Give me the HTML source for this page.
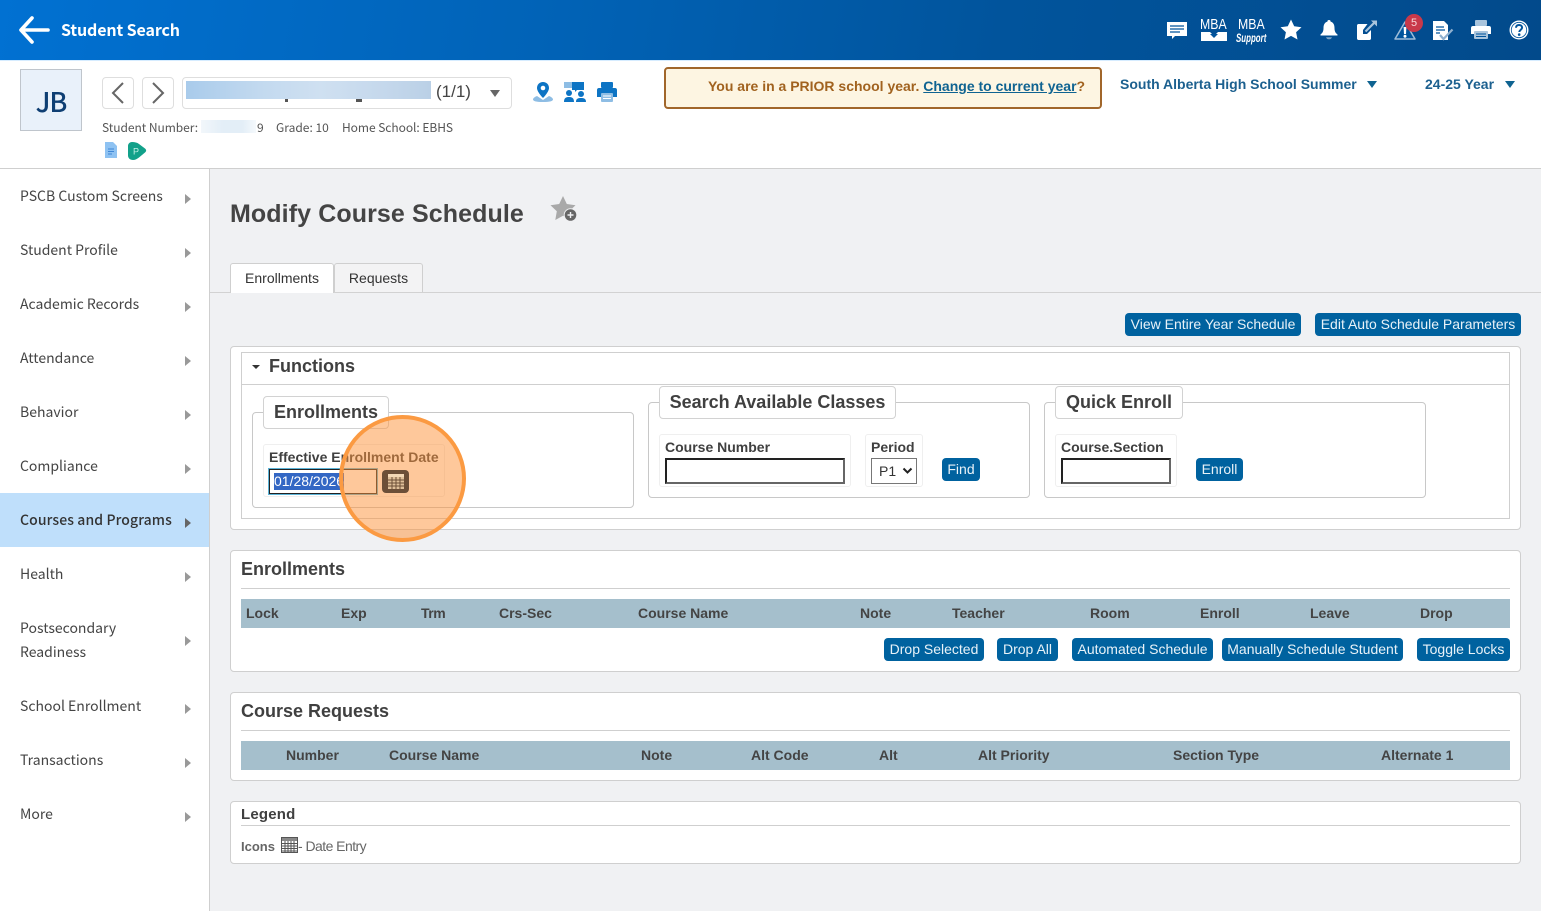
<!DOCTYPE html>
<html><head><meta charset="utf-8"><title>Modify Course Schedule</title>
<style>
*{box-sizing:border-box}
html,body{margin:0;padding:0}
body{width:1541px;height:911px;position:relative;overflow:hidden;background:#f0f1f3;font-family:"Liberation Sans",sans-serif;color:#444}
.a,.t,.b,.box{position:absolute}
.t{white-space:nowrap;line-height:16px}
.b{background:#00629f;color:#e8f2f8;border-radius:4px;font-size:14px;letter-spacing:0;text-align:center;line-height:23px;height:23px;white-space:nowrap}
.box{background:#fff;border:1px solid #cfcfcf;border-radius:4px}
.fs{background:#fff;border:1px solid #c8c8c8;border-radius:4px}
.lg{background:#fff;border:1px solid #d2d2d2;border-radius:4px;font-weight:bold;font-size:18px;color:#404040;line-height:31px;text-align:center;height:33px}
.fld{background:#fff;border:1px solid #efefef;border-radius:3px}
.lb{font-weight:bold;font-size:14px;color:#404040}
.inp{background:#fff;border:2px solid;border-color:#222 #666 #666 #222;height:26px}
.nav{font-family:"Noto Sans CJK SC","Noto Sans CJK JP",sans-serif;font-size:14px;color:#444;left:20px;letter-spacing:0}
.ar{position:absolute;left:185px;width:0;height:0;border-left:6px solid #999;border-top:5px solid transparent;border-bottom:5px solid transparent}
.th{font-weight:bold;font-size:14px;color:#444;top:605px}
.th2{font-weight:bold;font-size:14px;color:#444;top:747px}
.h{font-weight:bold;font-size:18px;color:#404040}
.side{font-family:"Noto Sans CJK SC","Noto Sans CJK JP",sans-serif}
</style></head><body>

<!-- top bar -->
<div class="a" style="left:0;top:0;width:1541px;height:60px;background:linear-gradient(100deg,#0171d2 0%,#0163b7 35%,#01549c 65%,#024a8b 100%)"></div>
<svg class="a" style="left:18px;top:15px" width="34" height="30" viewBox="0 0 34 30"><path d="M14 3 L3 15 L14 27 M3 15 H30" fill="none" stroke="#fff" stroke-width="3.6" stroke-linecap="round" stroke-linejoin="round"/></svg>
<div class="t side" style="left:61px;top:19px;color:#fff;font-weight:bold;font-size:16px;line-height:20px;letter-spacing:-.12px">Student Search</div>

<!-- top icons -->
<svg class="a" style="left:1166px;top:21px" width="22" height="20" viewBox="0 0 22 20"><path d="M1 1H21V15H9L6 18V15H1Z" fill="#fff"/><path d="M4 5H18M4 8H18M4 11H14" stroke="#01549c" stroke-width="1.3"/></svg>
<div class="t" style="left:1200px;top:17px;color:#fff;font-size:15px;transform:scaleX(.82);transform-origin:0 0">MBA</div>
<svg class="a" style="left:1201px;top:32px" width="26" height="10" viewBox="0 0 26 10"><path d="M0 0H9L13 4L17 0H26V9H0Z" fill="#fff"/><path d="M9 2H17L13 6Z" fill="#01549c"/></svg>
<div class="t" style="left:1238px;top:17px;color:#fff;font-size:15px;transform:scaleX(.82);transform-origin:0 0">MBA</div>
<div class="t" style="left:1236px;top:30px;color:#fff;font-size:12px;font-weight:bold;font-style:italic;transform:scaleX(.66);transform-origin:0 0">Support</div>
<svg class="a" style="left:1280px;top:19px" width="22" height="22" viewBox="0 0 22 22"><path d="M11 0.5L14.2 7.3 21.5 8.2 16.1 13.2 17.5 20.5 11 16.9 4.5 20.5 5.9 13.2 0.5 8.2 7.8 7.3Z" fill="#fff"/></svg>
<svg class="a" style="left:1319px;top:19px" width="20" height="22" viewBox="0 0 20 22"><path d="M10 1C11 1 11.6 1.6 11.6 2.6C14.5 3.4 15.5 6 15.5 9C15.5 12 16.4 14 18.5 15.5V16.5H1.5V15.5C3.6 14 4.5 12 4.5 9C4.5 6 5.5 3.4 8.4 2.6C8.4 1.6 9 1 10 1Z" fill="#fff"/><path d="M7 18.2H13C12.5 19.6 11.4 20.3 10 20.3S7.5 19.6 7 18.2Z" fill="#7fa5c8"/></svg>
<svg class="a" style="left:1356px;top:19px" width="22" height="22" viewBox="0 0 22 22"><path d="M2.500 5H11.500L7 11V15H11L15 11V19.500C15 20.300 14.300 21 13.500 21H2.500C1.700 21 1 20.300 1 19.500V6.500C1 5.700 1.700 5 2.500 5Z" fill="#fff"/><path d="M9.500 12.500L19 3" fill="none" stroke="#a9c4dc" stroke-width="2.200"/><path d="M15 1.500H21V7.500Z" fill="#a9c4dc"/></svg>
<svg class="a" style="left:1394px;top:19px" width="24" height="22" viewBox="0 0 24 22"><path d="M11 3L21 20H1Z" fill="#01549c" stroke="#9fbcd8" stroke-width="1.500" stroke-linejoin="round"/><path d="M9.600 8H12.400L12 15H10Z" fill="#fff"/><circle cx="11" cy="17.300" r="1.500" fill="#fff"/></svg>
<div class="a" style="left:1405px;top:14px;width:18px;height:18px;border-radius:50%;background:#c9394a;color:#f6d8da;font-size:11px;line-height:18px;text-align:center">5</div>
<svg class="a" style="left:1432px;top:20px" width="22" height="22" viewBox="0 0 22 22"><path d="M1 1H12L16 5V20H1Z" fill="#fff"/><path d="M4 7H12M4 10H13M4 13H8" stroke="#01549c" stroke-width="1.300"/><path d="M8 15L11.500 19L20.500 9.500" fill="none" stroke="#8fb0cf" stroke-width="2.200"/></svg>
<svg class="a" style="left:1470px;top:19px" width="22" height="22" viewBox="0 0 22 22"><rect x="5" y="1" width="12" height="6" rx="1" fill="#a9c4dc"/><path d="M3 7H19C20.200 7 21 7.800 21 9V15H1V9C1 7.800 1.800 7 3 7Z" fill="#fff"/><rect x="4" y="12" width="14" height="8" rx="1" fill="#a9c4dc"/><path d="M6 15H16M6 17.500H16" stroke="#01549c" stroke-width="1"/></svg>
<svg class="a" style="left:1509px;top:20px" width="20" height="20" viewBox="0 0 20 20"><circle cx="10" cy="10" r="9.500" fill="#fff"/><circle cx="10" cy="10" r="7.700" fill="none" stroke="#01549c" stroke-width=".8"/><path d="M7 7.800C7 5.900 8.300 5 10 5C11.800 5 13.100 6 13.100 7.600C13.100 9.800 10.300 9.900 10.300 12" fill="none" stroke="#01549c" stroke-width="2"/><circle cx="10.200" cy="14.600" r="1.300" fill="#01549c"/></svg>

<!-- student header -->
<div class="a" style="left:0;top:60px;width:1541px;height:109px;background:#fff;border-top:1px solid #d6ecff;border-bottom:1px solid #cfcfcf"></div>
<div class="a side" style="left:20px;top:69px;width:62px;height:62px;background:#e9f1fa;border:1px solid #bfc5cc;color:#0f3f73;font-size:27px;line-height:62px;text-align:center;letter-spacing:-1px;font-weight:500">JB</div>
<div class="a" style="left:102px;top:77px;width:32px;height:32px;border:1px solid #dedede;border-radius:4px;background:#fff"></div>
<svg class="a" style="left:110px;top:81px" width="16" height="24" viewBox="0 0 16 24"><path d="M13 2L3 12L13 22" fill="none" stroke="#666" stroke-width="2"/></svg>
<div class="a" style="left:142px;top:77px;width:32px;height:32px;border:1px solid #dedede;border-radius:4px;background:#fff"></div>
<svg class="a" style="left:150px;top:81px" width="16" height="24" viewBox="0 0 16 24"><path d="M3 2L13 12L3 22" fill="none" stroke="#666" stroke-width="2"/></svg>
<div class="a" style="left:182px;top:77px;width:330px;height:32px;border:1px solid #dedede;border-radius:4px;background:#fff"></div>
<div class="a" style="left:186px;top:81px;width:245px;height:18px;background:linear-gradient(90deg,#a9cbeb 0%,#c2d9ef 30%,#cfe0f1 55%,#c5d8ec 80%,#bad0e6 100%)"></div>
<div class="a" style="left:285px;top:99px;width:3px;height:3px;background:#555"></div>
<div class="a" style="left:356px;top:99px;width:6px;height:3px;background:#555"></div>
<div class="t" style="left:436px;top:84px;font-size:17px;color:#444">(1/1)</div>
<div class="a" style="left:490px;top:90px;width:0;height:0;border-top:7px solid #666;border-left:5.500px solid transparent;border-right:5.500px solid transparent"></div>
<div class="t side" style="left:102px;top:120px;font-size:12px;color:#555;letter-spacing:-.05px">Student Number:</div>
<div class="a" style="left:201px;top:120px;width:55px;height:13px;background:linear-gradient(90deg,#f2f7fb,#e3eef7 40%,#e3eef7 75%,#f5f9fc)"></div>
<div class="t side" style="left:257px;top:120px;font-size:12px;color:#555">9</div>
<div class="t side" style="left:276px;top:120px;font-size:12px;color:#555">Grade: 10</div>
<div class="t side" style="left:342px;top:120px;font-size:12px;color:#555;letter-spacing:-.05px">Home School: EBHS</div>
<svg class="a" style="left:104px;top:142px" width="14" height="17" viewBox="0 0 14 17"><path d="M1 0H9L13 4V16H1Z" fill="#8ec2f2"/><path d="M4 7H10M4 9.500H10M4 12H8" stroke="#3f87d6" stroke-width="1"/></svg>
<svg class="a" style="left:127px;top:141px" width="20" height="20" viewBox="0 0 20 20"><path d="M5 1C2.500 1 1 3 1 5V14.500C1 17 3 19 6 19C8 19 10 18 12 16.500L18 11.500C19.500 10.300 19.500 8.700 18 7.500L12 3C10 1.500 8 1 5 1Z" fill="#12a18a"/><text x="6" y="13.500" font-size="9" fill="#bff0e4" font-family="Liberation Sans">P</text></svg>

<svg class="a" style="left:532px;top:81px" width="22" height="22" viewBox="0 0 22 22"><path d="M11 1C7.500 1 5 3.500 5 7C5 11 11 17 11 17S17 11 17 7C17 3.500 14.500 1 11 1Z" fill="#0d74c4"/><circle cx="11" cy="7" r="2.300" fill="#fff"/><path d="M5 15C2.500 16 1 17.300 1 18.500C1 20 4 21 11 21S21 20 21 18.500C21 17.300 19.500 16 17 15L11 19Z" fill="#8ebde4"/></svg>
<svg class="a" style="left:564px;top:81px" width="22" height="22" viewBox="0 0 22 22"><path d="M0 1H9V7H0Z" fill="#8ebde4"/><path d="M8 1H20V9H13L11 11V9H8Z" fill="#0d74c4"/><circle cx="5" cy="12" r="3" fill="#0d74c4"/><circle cx="17" cy="13" r="3" fill="#0d74c4"/><path d="M0 21C0 17 2 16 5 16S10 17 10 21ZM12 21C12 17.500 14 17 17 17S22 17.500 22 21Z" fill="#0d74c4"/></svg>
<svg class="a" style="left:596px;top:81px" width="22" height="22" viewBox="0 0 22 22"><rect x="5" y="1" width="12" height="6" rx="1" fill="#0d74c4"/><path d="M3 7H19C20.200 7 21 7.800 21 9V16H1V9C1 7.800 1.800 7 3 7Z" fill="#0d74c4"/><rect x="5" y="12" width="12" height="9" rx="1" fill="#8ebde4"/><path d="M7 15H15M7 17.500H15" stroke="#fff" stroke-width="1"/></svg>

<div class="a" style="left:664px;top:67px;width:438px;height:42px;background:#fdf5e2;border:2px solid #a1662a;border-radius:4px"></div>
<div class="t" style="left:708px;top:78px;font-size:14px;font-weight:bold;color:#a1621f">You are in a PRIOR school year. <span style="color:#0f6391;text-decoration:underline">Change to current year</span>?</div>
<div class="t" style="left:1120px;top:76px;font-size:14px;font-weight:bold;color:#1c608f">South Alberta High School Summer</div>
<div class="a" style="left:1367px;top:81px;width:0;height:0;border-top:7px solid #0f6391;border-left:5.500px solid transparent;border-right:5.500px solid transparent"></div>
<div class="t" style="left:1425px;top:76px;font-size:14px;font-weight:bold;color:#1c608f">24-25 Year</div>
<div class="a" style="left:1505px;top:81px;width:0;height:0;border-top:7px solid #0f6391;border-left:5.500px solid transparent;border-right:5.500px solid transparent"></div>

<!-- sidebar -->
<div class="a" style="left:0;top:169px;width:210px;height:742px;background:#fff;border-right:1px solid #cfcfcf"></div>
<div class="a" style="left:0;top:493px;width:209px;height:54px;background:#bfdffb"></div>
<div class="t nav" style="top:188px">PSCB Custom Screens</div><div class="ar" style="top:194px"></div>
<div class="t nav" style="top:242px">Student Profile</div><div class="ar" style="top:248px"></div>
<div class="t nav" style="top:296px">Academic Records</div><div class="ar" style="top:302px"></div>
<div class="t nav" style="top:350px">Attendance</div><div class="ar" style="top:356px"></div>
<div class="t nav" style="top:404px">Behavior</div><div class="ar" style="top:410px"></div>
<div class="t nav" style="top:458px">Compliance</div><div class="ar" style="top:464px"></div>
<div class="t nav" style="top:512px;font-weight:500;color:#333;letter-spacing:.1px">Courses and Programs</div><div class="ar" style="top:518px;border-left-color:#666"></div>
<div class="t nav" style="top:566px">Health</div><div class="ar" style="top:572px"></div>
<div class="t nav" style="top:620px">Postsecondary</div>
<div class="t nav" style="top:644px">Readiness</div><div class="ar" style="top:636px"></div>
<div class="t nav" style="top:698px">School Enrollment</div><div class="ar" style="top:704px"></div>
<div class="t nav" style="top:752px">Transactions</div><div class="ar" style="top:758px"></div>
<div class="t nav" style="top:806px">More</div><div class="ar" style="top:812px"></div>

<!-- title -->
<div class="t" style="left:230px;top:199px;font-size:25px;line-height:30px;font-weight:bold;color:#444;letter-spacing:.1px">Modify Course Schedule</div>
<svg class="a" style="left:550px;top:195px" width="29" height="29" viewBox="0 0 29 29"><path d="M13 1L16.800 9 25.500 10.200 19.200 16.300 20.700 25 13 20.800 5.300 25 6.800 16.300 .5 10.200 9.200 9Z" fill="#a9a9a9"/><circle cx="20.500" cy="20" r="6.800" fill="#f0f1f3"/><circle cx="20.500" cy="20" r="5.800" fill="#666"/><path d="M17.500 20H23.500M20.500 17V23" stroke="#f0f1f3" stroke-width="1.400"/></svg>

<!-- tabs -->
<div class="a" style="left:210px;top:292px;width:1331px;height:1px;background:#d2d2d2"></div>
<div class="a" style="left:230px;top:263px;width:104px;height:30px;background:#fff;border:1px solid #cfcfcf;border-bottom:none;border-radius:3px 3px 0 0;font-size:14px;color:#333;text-align:center;line-height:29px">Enrollments</div>
<div class="a" style="left:334px;top:263px;width:89px;height:29px;background:#f3f3f4;border:1px solid #cfcfcf;border-bottom:none;border-radius:3px 3px 0 0;font-size:14px;color:#333;text-align:center;line-height:29px">Requests</div>

<div class="b" style="left:1125px;top:313px;width:176px">View Entire Year Schedule</div>
<div class="b" style="left:1315px;top:313px;width:206px">Edit Auto Schedule Parameters</div>

<!-- Functions -->
<div class="box" style="left:230px;top:346px;width:1291px;height:184px"></div>
<div class="a" style="left:241px;top:352px;width:1269px;height:167px;border:1px solid #cfcfcf"></div>
<div class="a" style="left:241px;top:384px;width:1269px;height:1px;background:#cfcfcf"></div>
<div class="a" style="left:252px;top:365px;width:0;height:0;border-top:4px solid #333;border-left:4px solid transparent;border-right:4px solid transparent"></div>
<div class="t h" style="left:269px;top:358px">Functions</div>

<div class="a fs" style="left:252px;top:412px;width:382px;height:96px"></div>
<div class="a lg" style="left:263px;top:396px;width:126px">Enrollments</div>
<div class="a fld" style="left:263px;top:444px;width:182px;height:53px"></div>
<div class="t lb" style="left:269px;top:449px">Effective Enrollment Date</div>
<div class="a" style="left:268px;top:468px;width:110px;height:27px;background:#fff;border:2px solid #222;outline:1px solid #5cb4d8;outline-offset:-1px"></div>
<div class="a" style="left:274px;top:473px;width:70px;height:17px;background:#3367c4"></div>
<div class="t" style="left:274px;top:473px;font-size:14px;color:#fff">01/28/2026</div>

<div class="a fs" style="left:648px;top:402px;width:382px;height:96px"></div>
<div class="a lg" style="left:659px;top:386px;width:237px">Search Available Classes</div>
<div class="a fld" style="left:659px;top:434px;width:192px;height:53px"></div>
<div class="t lb" style="left:665px;top:439px">Course Number</div>
<div class="a inp" style="left:665px;top:458px;width:180px"></div>
<div class="a fld" style="left:865px;top:434px;width:58px;height:53px"></div>
<div class="t lb" style="left:871px;top:439px">Period</div>
<div class="a" style="left:871px;top:458px;width:46px;height:26px;border:1px solid #777;background:#fff;font-size:14px;color:#333;line-height:25px;padding-left:7px">P1</div>
<svg class="a" style="left:902px;top:467px" width="11" height="8" viewBox="0 0 11 8"><path d="M1.500 1.500L5.500 5.500L9.500 1.500" fill="none" stroke="#222" stroke-width="2"/></svg>
<div class="b" style="left:942px;top:458px;width:38px">Find</div>

<div class="a fs" style="left:1044px;top:402px;width:382px;height:96px"></div>
<div class="a lg" style="left:1055px;top:386px;width:128px">Quick Enroll</div>
<div class="a fld" style="left:1055px;top:434px;width:122px;height:53px"></div>
<div class="t lb" style="left:1061px;top:439px">Course.Section</div>
<div class="a inp" style="left:1061px;top:458px;width:110px"></div>
<div class="b" style="left:1196px;top:458px;width:47px">Enroll</div>

<!-- spotlight -->
<div class="a" style="left:339px;top:415px;width:127px;height:127px;border-radius:50%;background:rgba(253,146,55,.5);border:4px solid #fb9a42"></div>
<div class="a" style="left:382px;top:470px;width:27px;height:23px;background:#6c4f38;border-radius:4px"></div>
<svg class="a" style="left:387px;top:473px" width="18" height="17" viewBox="0 0 18 17"><rect x="1" y="1" width="16" height="15" fill="#e0c09a"/><rect x="1" y="1" width="16" height="3" fill="#f3d8b6"/><path d="M1 7H17M1 10H17M1 13H17M5 4V16M9 4V16M13 4V16" stroke="#6c4f38" stroke-width="1"/></svg>

<!-- Enrollments -->
<div class="box" style="left:230px;top:550px;width:1291px;height:122px"></div>
<div class="t h" style="left:241px;top:561px">Enrollments</div>
<div class="a" style="left:241px;top:588px;width:1269px;height:1px;background:#cfcfcf"></div>
<div class="a" style="left:241px;top:599px;width:1269px;height:29px;background:#a5bfcc"></div>
<div class="t th" style="left:246px">Lock</div>
<div class="t th" style="left:341px">Exp</div>
<div class="t th" style="left:421px;letter-spacing:-.5px">Trm</div>
<div class="t th" style="left:499px">Crs-Sec</div>
<div class="t th" style="left:638px">Course Name</div>
<div class="t th" style="left:860px">Note</div>
<div class="t th" style="left:952px">Teacher</div>
<div class="t th" style="left:1090px">Room</div>
<div class="t th" style="left:1200px">Enroll</div>
<div class="t th" style="left:1310px">Leave</div>
<div class="t th" style="left:1420px">Drop</div>
<div class="b" style="left:884px;top:638px;width:100px">Drop Selected</div>
<div class="b" style="left:997px;top:638px;width:61px">Drop All</div>
<div class="b" style="left:1072px;top:638px;width:141px">Automated Schedule</div>
<div class="b" style="left:1222px;top:638px;width:181px">Manually Schedule Student</div>
<div class="b" style="left:1417px;top:638px;width:93px">Toggle Locks</div>

<!-- Course requests -->
<div class="box" style="left:230px;top:692px;width:1291px;height:89px"></div>
<div class="t h" style="left:241px;top:703px">Course Requests</div>
<div class="a" style="left:241px;top:730px;width:1269px;height:1px;background:#cfcfcf"></div>
<div class="a" style="left:241px;top:741px;width:1269px;height:29px;background:#a5bfcc"></div>
<div class="t th2" style="left:286px">Number</div>
<div class="t th2" style="left:389px">Course Name</div>
<div class="t th2" style="left:641px">Note</div>
<div class="t th2" style="left:751px">Alt Code</div>
<div class="t th2" style="left:879px">Alt</div>
<div class="t th2" style="left:978px">Alt Priority</div>
<div class="t th2" style="left:1173px">Section Type</div>
<div class="t th2" style="left:1381px">Alternate 1</div>

<!-- Legend -->
<div class="box" style="left:230px;top:801px;width:1291px;height:63px"></div>
<div class="t" style="left:241px;top:807px;font-size:15px;font-weight:bold;color:#404040;letter-spacing:.2px">Legend</div>
<div class="a" style="left:241px;top:825px;width:1269px;height:1px;background:#cfcfcf"></div>
<div class="t" style="left:241px;top:839px;font-size:13px;font-weight:bold;color:#666">Icons</div>
<svg class="a" style="left:281px;top:837px" width="17" height="16" viewBox="0 0 17 16"><rect x=".5" y=".5" width="16" height="15" fill="#fff" stroke="#555"/><rect x="1" y="1" width="15" height="3" fill="#888"/><path d="M1 6.500H16M1 9H16M1 11.500H16M1 14H16M4 4V15M7 4V15M10 4V15M13 4V15" stroke="#555" stroke-width="1"/></svg>
<div class="t" style="left:298px;top:838px;font-size:14px;color:#666;letter-spacing:-.55px">- Date Entry</div>

</body></html>
